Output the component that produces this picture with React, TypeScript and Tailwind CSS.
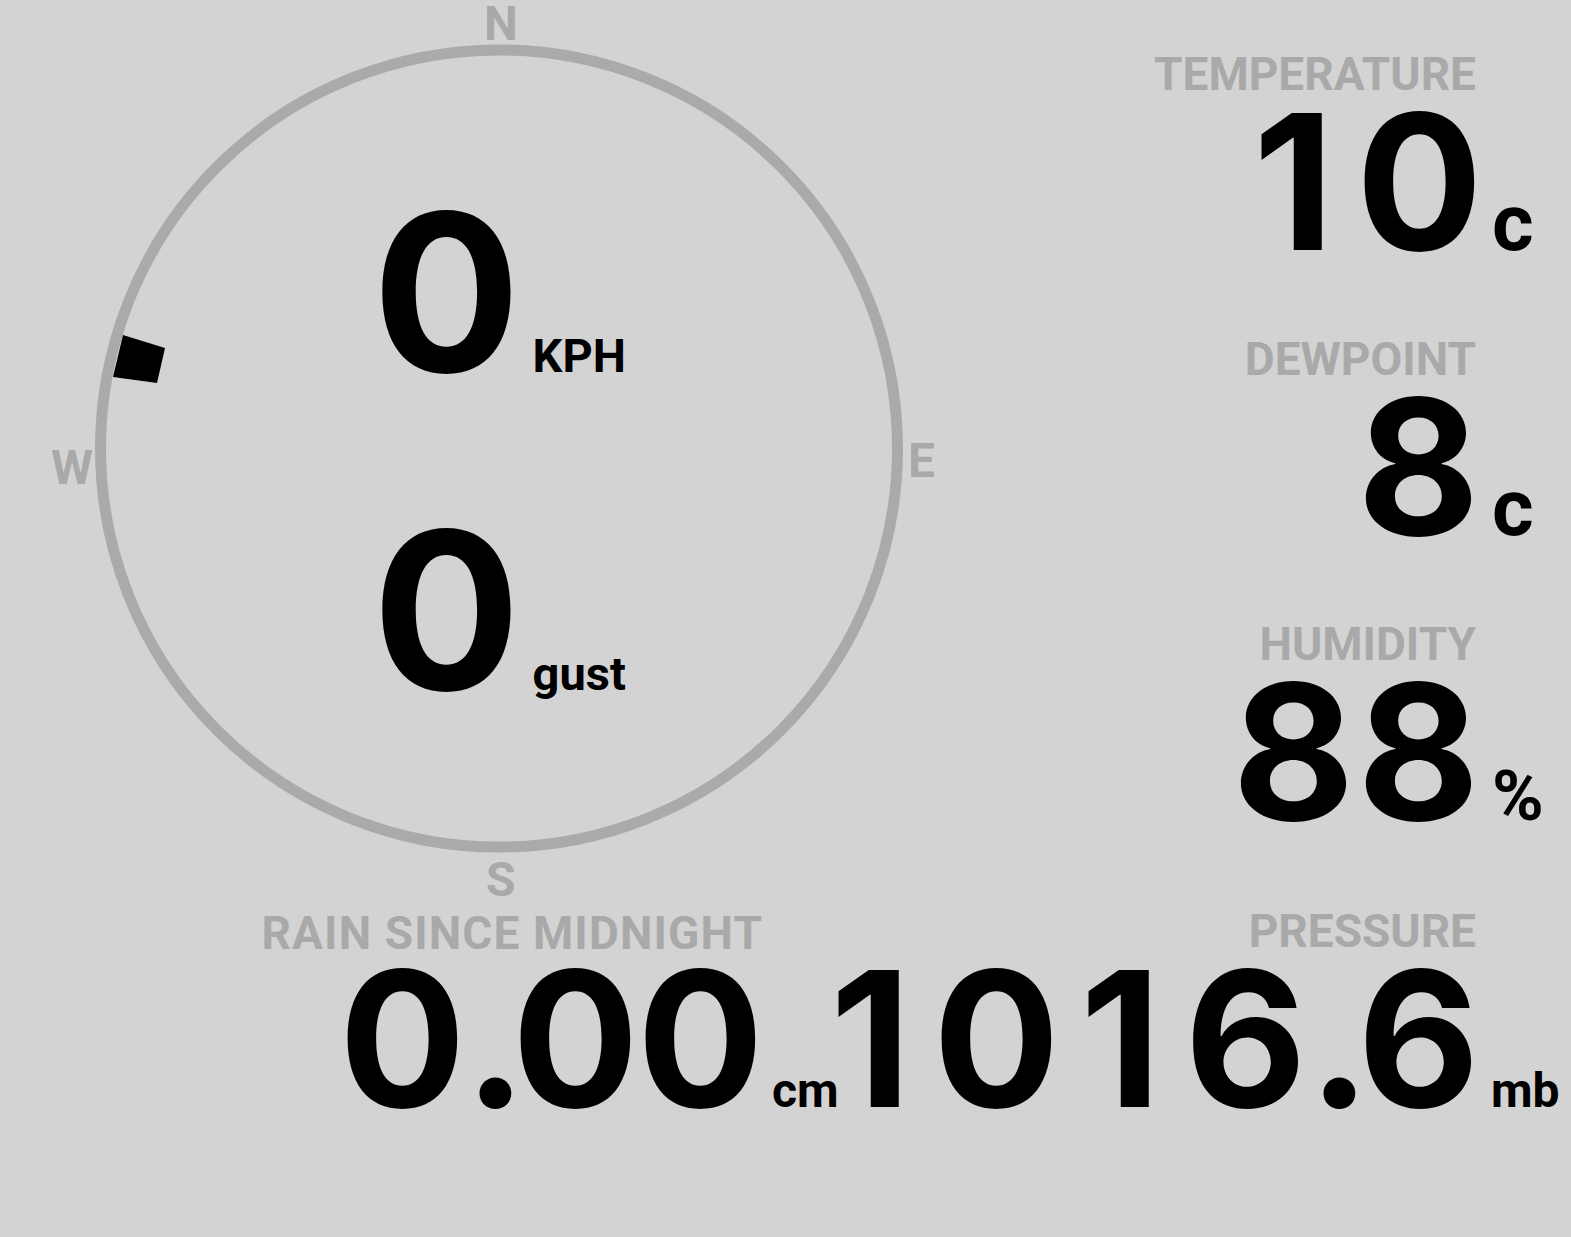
import React from "react";

type ReadingProps = {
  label: string;
  value: string;
  unit: string;
  unitClass?: string;
  labelClass?: string;
};

// digits sit in fixed cells so the big figures keep an even pitch
function BigNumber({ value }: { value: string }) {
  return (
    <div className="whitespace-nowrap font-['Inter',sans-serif] text-[188px] leading-[175px] font-bold text-black">
      {value.split("").map((ch, i) => (
        <span
          key={i}
          className={ch === "." ? "inline-block w-[48px] text-center" : "inline-block w-[125px] text-center"}
        >
          {ch}
        </span>
      ))}
    </div>
  );
}

function Reading({ label, value, unit, unitClass = "", labelClass = "" }: ReadingProps) {
  return (
    <div className="flex flex-col items-end">
      <div
        className={
          "text-[46px] leading-[46px] font-bold text-[#a9a9a9] whitespace-nowrap " + labelClass
        }
      >
        {label}
      </div>
      <div className="-mt-[3px] flex items-baseline">
        <BigNumber value={value} />
        <span className={"shrink-0 font-bold leading-none text-black whitespace-nowrap " + unitClass}>
          {unit}
        </span>
      </div>
    </div>
  );
}

function Compass() {
  return (
    <div className="relative ml-[95px] mt-[44px] h-[808px] w-[808px]">
      <svg
        className="absolute inset-0 overflow-visible"
        width="808"
        height="808"
        viewBox="0 0 808 808"
      >
        <circle cx="404" cy="404.5" r="398.5" fill="none" stroke="#aaaaaa" strokeWidth="11" />
        {/* wind direction marker */}
        <polygon points="28,291 70,304 62,339 18,333" fill="#000" />
      </svg>

      <span className="absolute left-[389px] top-[-44px] text-[48px] leading-none font-bold text-[#a9a9a9]">N</span>
      <span className="absolute left-[813px] top-[393px] text-[48px] leading-none font-bold text-[#a9a9a9]">E</span>
      <span className="absolute left-[-44px] top-[400px] text-[48px] leading-none font-bold text-[#a9a9a9]">W</span>
      <span className="absolute left-[391px] top-[812px] text-[48px] leading-none font-bold text-[#a9a9a9]">S</span>

      <div className="relative flex flex-col items-center gap-[98px] pt-[138px]">
        <div className="flex items-baseline">
          <span className="font-['Inter',sans-serif] text-[220px] leading-none font-bold">0</span>
          <span className="ml-[12px] text-[47px] leading-none font-bold">KPH</span>
        </div>
        <div className="flex items-baseline">
          <span className="font-['Inter',sans-serif] text-[220px] leading-none font-bold">0</span>
          <span className="ml-[12px] text-[47px] leading-none font-bold">gust</span>
        </div>
      </div>
    </div>
  );
}

export default function App() {
  return (
    <div className="flex h-[1237px] w-[1571px] flex-col overflow-hidden bg-[#d3d3d3] font-['Roboto',sans-serif]">
      <div className="flex h-[906px]">
        <div className="w-[1000px] shrink-0">
          <Compass />
        </div>
        <div className="flex flex-1 flex-col items-end gap-[67px] pt-[51px]">
          <Reading label="TEMPERATURE" value="10" unit="c" labelClass="mr-[95px]" unitClass="w-[90px] pl-[11px] text-[80px]" />
          <Reading label="DEWPOINT" value="8" unit="c" labelClass="mr-[95px]" unitClass="w-[90px] pl-[11px] text-[80px]" />
          <Reading label="HUMIDITY" value="88" unit="%" labelClass="mr-[95px]" unitClass="w-[90px] pl-[11px] text-[70px]" />
        </div>
      </div>
      <div className="flex items-end justify-end pt-[2px]">
        <Reading
          label="RAIN SINCE MIDNIGHT"
          value="0.00"
          unit="cm"
          labelClass="mb-[-2px] mr-[45px] tracking-[1.1px]"
          unitClass="w-[46px] pl-[10px] text-[48px]"
        />
        <Reading label="PRESSURE" value="1016.6" unit="mb" labelClass="mr-[95px]" unitClass="w-[90px] pl-[10px] text-[48px]" />
      </div>
    </div>
  );
}
